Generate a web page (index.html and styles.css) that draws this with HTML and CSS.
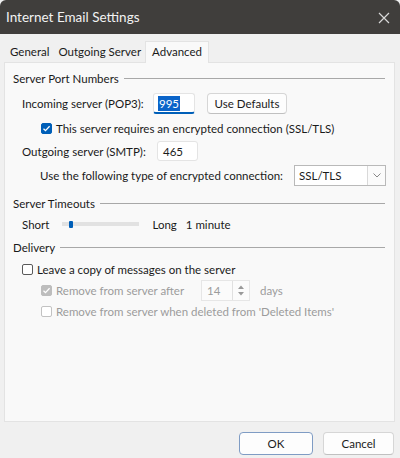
FILE: index.html
```html
<!DOCTYPE html>
<html>
<head>
<meta charset="utf-8">
<link rel="stylesheet" href="styles.css">
</head>
<body>
<div class="window">
  <div class="titlebar">
    <span class="title">Internet Email Settings</span>
    <svg class="close" width="12" height="12" viewBox="0 0 12 12"><path d="M1 1L11 11M11 1L1 11" stroke="#d8d8d8" stroke-width="1.2" fill="none"/></svg>
  </div>
  <div class="content">
    <div class="tabs">
      <div class="tab">General</div>
      <div class="tab">Outgoing Server</div>
      <div class="tab active">Advanced</div>
    </div>
    <div class="panel">
      <div class="group h1"><span>Server Port Numbers</span><div class="rule"></div></div>
      <div class="row r-in">
        <span class="lbl w-in">Incoming server (POP3):</span>
        <div class="input focused"><span class="sel">995</span></div>
        <div class="btn defaults">Use Defaults</div>
      </div>
      <div class="row r-chk">
        <span class="cb checked"><svg width="9" height="9" viewBox="0 0 9 9"><path d="M1.5 4.7L3.5 6.6L7.6 2.3" stroke="#fff" stroke-width="1.3" fill="none"/></svg></span>
        <span>This server requires an encrypted connection (SSL/TLS)</span>
      </div>
      <div class="row r-out">
        <span class="lbl w-out">Outgoing server (SMTP):</span>
        <div class="input out">465</div>
      </div>
      <div class="row r-enc">
        <span class="lbl w-enc">Use the following type of encrypted connection:</span>
        <div class="select"><span class="val">SSL/TLS</span><span class="drop"><svg width="8" height="5" viewBox="0 0 8 5"><path d="M0.5 0.5L4 4L7.5 0.5" stroke="#888" stroke-width="1" fill="none"/></svg></span></div>
      </div>
      <div class="group h2"><span>Server Timeouts</span><div class="rule"></div></div>
      <div class="row r-time">
        <span class="lbl short">Short</span>
        <div class="slider"><div class="thumb"></div></div>
        <span class="lbl long">Long</span>
        <span>1 minute</span>
      </div>
      <div class="group h3"><span>Delivery</span><div class="rule"></div></div>
      <div class="row r-leave">
        <span class="cb"></span>
        <span>Leave a copy of messages on the server</span>
      </div>
      <div class="row r-after disabled">
        <span class="cb checked dis"><svg width="9" height="9" viewBox="0 0 9 9"><path d="M1.5 4.7L3.5 6.6L7.6 2.3" stroke="#fff" stroke-width="1.3" fill="none"/></svg></span>
        <span class="lbl w-after">Remove from server after</span>
        <div class="spin"><span class="num">14</span><span class="arrows"><svg width="6" height="4" viewBox="0 0 6 4"><path d="M0 4L3 0.5L6 4Z" fill="#999"/></svg><svg width="6" height="4" viewBox="0 0 6 4"><path d="M0 0L3 3.5L6 0Z" fill="#999"/></svg></span></div>
        <span>days</span>
      </div>
      <div class="row r-del disabled">
        <span class="cb dis"></span>
        <span>Remove from server when deleted from 'Deleted Items'</span>
      </div>
    </div>
    <div class="footer">
      <div class="btn ok">OK</div>
      <div class="btn cancel">Cancel</div>
    </div>
  </div>
</div>
</body>
</html>
```
FILE: styles.css
```css
* { box-sizing: border-box; }
html, body { margin: 0; padding: 0; }
body {
  width: 400px;
  height: 458px;
  background: #f0f0f0;
  font-family: "Lato", "Noto Sans", sans-serif;
  font-size: 11.5px;
  color: #1a1a1a;
  overflow: hidden;
}
.window { width: 400px; height: 458px; display: flex; flex-direction: column; }
.titlebar {
  height: 34px;
  background: #403e3c;
  display: flex;
  align-items: center;
  justify-content: space-between;
  padding: 0 10px 0 6px;
  border-radius: 6px 6px 0 0;
}
.title { color: #f2f2f2; font-size: 13.5px; }
.close { margin-top: 1px; }
.content { flex: 1; display: flex; flex-direction: column; padding: 0 5px 0 4px; }
.tabs { display: flex; margin-top: 7px; height: 21px; align-items: flex-end; }
.tab { padding: 0 4px; height: 20px; line-height: 20px; color: #1a1a1a; white-space: nowrap; }
.tab:first-child { padding-left: 6px; }
.tab:nth-child(2) { padding-left: 5px; }
.tab.active {
  height: 22px;
  line-height: 20px;
  background: #f9f9f9;
  border: 1px solid #e3e3e3;
  border-bottom: none;
  margin-bottom: -1px;
  position: relative;
  z-index: 1;
  padding: 0 6px;
}
.panel {
  height: 360px;
  background: #f9f9f9;
  border: 1px solid #e3e3e3;
  padding: 7px 8px 0 8px;
  display: flex;
  flex-direction: column;
}
.group { display: flex; align-items: center; height: 16px; white-space: nowrap; }
.group .rule { flex: 1; height: 1px; background: #a8a8a8; margin-left: 5px; margin-right: 1px; }
.row { display: flex; align-items: center; white-space: nowrap; }
.lbl { flex: none; }
.w-in { width: 131px; }
.w-out { width: 135px; }
.w-enc { width: 254px; }
.w-after { width: 145px; }
.h2 { margin-top: 9px; }
.h3 { margin-top: 7px; }
.r-in { margin-top: 7px; height: 21px; padding-left: 9px; }
.r-chk { margin-top: 4px; height: 20px; padding-left: 28px; }
.r-out { margin-top: 3px; height: 20px; padding-left: 9px; }
.r-enc { margin-top: 4px; height: 21px; padding-left: 27px; }
.r-time { margin-top: 5px; height: 16px; padding-left: 9px; }
.r-leave { margin-top: 6px; height: 16px; padding-left: 9px; }
.r-after { margin-top: 3px; height: 21px; padding-left: 28px; }
.r-del { margin-top: 2px; height: 16px; padding-left: 28px; }

.input {
  height: 20px;
  background: #fff;
  border: 1px solid #e4e4e4;
  border-bottom: 1px solid #8a8a8a;
  border-radius: 3px;
  display: flex;
  align-items: center;
  padding-left: 5px;
}
.input.focused { width: 42px; border-bottom: 2px solid #005fb8; padding-left: 4px; height: 21px; }
.input.out { width: 41px; border-bottom-color: #e4e4e4; }
.sel { background: #0a64c9; color: #fff; padding: 0 1px; line-height: 15px; }
.btn {
  height: 21px;
  background: #fdfdfd;
  border: 1px solid #d6d6d6;
  border-bottom-color: #c0c0c0;
  border-radius: 4px;
  display: flex;
  align-items: center;
  justify-content: center;
}
.defaults { width: 80px; margin-left: 12px; }
.cb {
  width: 11px; height: 11px;
  border: 1px solid #5a5a5a;
  border-radius: 2px;
  background: #fff;
  margin-right: 4px;
  flex: none;
  display: flex; align-items: center; justify-content: center;
}
.cb.checked { background: #005fb8; border-color: #005fb8; }
.cb.dis { border-color: #c2c2c2; }
.cb.checked.dis { background: #bdbdbd; border-color: #bdbdbd; }
.disabled { color: #9c9c9c; }

.select {
  width: 94px; height: 21px;
  background: #fff;
  border: 1px solid #b9b9b9;
  display: flex;
  align-items: center;
}
.select .val { flex: 1; padding-left: 4px; }
.select .drop {
  width: 18px; height: 19px;
  border-left: 1px solid #d9d9d9;
  display: flex; align-items: center; justify-content: center;
  background: #fbfbfb;
}
.slider { width: 77px; height: 4px; background: #e2e2e2; margin-left: 13px; position: relative; }
.thumb { position: absolute; left: 7px; top: -1px; width: 4px; height: 7px; background: #005fb8; border-radius: 1px; }
.long { margin-left: 13px; margin-right: 9px; }
.spin {
  width: 49px; height: 21px;
  margin-right: 10px;
  background: #fbfbfb;
  border: 1px solid #e6e6e6;
  display: flex; align-items: center;
}
.spin .num { flex: 1; padding-left: 5px; }
.spin .arrows {
  width: 17px; height: 19px;
  border-left: 1px solid #e0e0e0;
  display: flex; flex-direction: column; align-items: center; justify-content: center; gap: 3px;
}
.footer { display: flex; justify-content: flex-end; gap: 10px; margin-top: 10px; padding-right: 1px; }
.ok { width: 74px; height: 23px; border: 1px solid #7f9cc4; }
.cancel { width: 71px; height: 23px; }
```
